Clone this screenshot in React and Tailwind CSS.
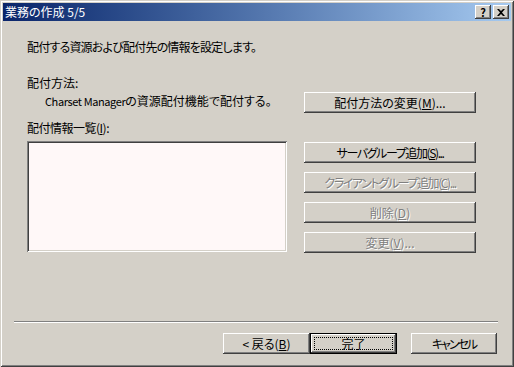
const font = {
  fontFamily: '"Noto Sans CJK JP", "Liberation Sans", sans-serif',
};

const bevel =
  "shadow-[inset_-1px_-1px_0_#404040,inset_1px_1px_0_#ffffff,inset_-2px_-2px_0_#808080,inset_2px_2px_0_#d4d0c8]";

function Button({ children, disabled, className = "" }) {
  return (
    <div
      className={`flex items-center justify-center bg-[#d4d0c8] text-[12px] leading-[12px] ${bevel} ${
        disabled ? "text-[#808080] [text-shadow:1px_1px_0_#ffffff]" : "text-black"
      } ${className}`}
    >
      {children}
    </div>
  );
}

function CaptionButton({ children }) {
  return (
    <div
      className={`w-[16px] h-[14px] flex items-center justify-center bg-[#d4d0c8] text-black text-[11px] font-bold leading-none ${bevel}`}
    >
      {children}
    </div>
  );
}

export default function App() {
  return (
    <div
      style={font}
      className="w-[514px] h-[367px] p-[3px] flex flex-col bg-[#d4d0c8] [font-feature-settings:'palt'] shadow-[inset_1px_1px_0_#d4d0c8,inset_-1px_-1px_0_#404040,inset_2px_2px_0_#ffffff,inset_-2px_-2px_0_#808080]"
    >
      {/* title bar */}
      <div className="h-[18px] flex items-center justify-between pl-[2px] pr-[2px] bg-gradient-to-r from-[#0a246a] to-[#a6caf0]">
        <span className="text-white text-[12px] leading-[12px]">業務の作成 5/5</span>
        <div className="flex gap-[2px]">
          <CaptionButton>?</CaptionButton>
          <CaptionButton>
            <svg width="8" height="7" viewBox="0 0 8 7">
              <path d="M0 0h2l2 2 2-2h2L5 3.5 8 7H6L4 5 2 7H0l3-3.5z" fill="#000" />
            </svg>
          </CaptionButton>
        </div>
      </div>

      {/* body */}
      <div className="flex flex-col pl-[24px] text-[12px] leading-[12px] text-black">
        <div className="mt-[20px] tracking-[-0.8px]">配付する資源および配付先の情報を設定します。</div>
        <div className="mt-[24px]">配付方法:</div>
        <div className="mt-[3px] flex items-start">
          <div className="w-[277px] pl-[18px] mt-[3px]">
            <span className="text-[11px] tracking-[-0.4px]">Charset Manager</span>の資源配付機能で配付する。
          </div>
          <Button className="w-[172px] h-[21px]">
            配付方法の変更(<u>M</u>)...
          </Button>
        </div>
        <div className="mt-[9px] tracking-[-0.5px]">
          配付情報一覧(<u>I</u>):
        </div>
        <div className="mt-[7px] flex items-start">
          <div className="w-[260px] h-[111px] bg-[#fff8f8] shadow-[inset_1px_1px_0_#808080,inset_-1px_-1px_0_#ffffff,inset_2px_2px_0_#404040,inset_-2px_-2px_0_#d4d0c8]" />
          <div className="ml-[17px] mt-[1px] flex flex-col gap-[9px]">
            <Button className="w-[172px] h-[21px] tracking-[-1.4px]">
              サーバグループ追加(<u>S</u>)...
            </Button>
            <Button disabled className="w-[172px] h-[21px] tracking-[-1.4px]">
              クライアントグループ追加(<u>C</u>)...
            </Button>
            <Button disabled className="w-[172px] h-[21px]">
              削除(<u>D</u>)
            </Button>
            <Button disabled className="w-[172px] h-[21px]">
              変更(<u>V</u>)...
            </Button>
          </div>
        </div>
      </div>

      {/* footer */}
      <div className="mt-auto flex flex-col pb-[10px]">
        <div className="ml-[11px] mr-[13px] h-[2px] border-t border-t-[#808080] border-b border-b-white" />
        <div className="mt-[10px] flex justify-end pr-[14px]">
          <Button className="w-[87px] h-[21px]">
            &lt; 戻る(<u>B</u>)
          </Button>
          <div className="w-[87px] h-[21px] border border-black">
            <Button className="w-full h-full relative">
              <div className="absolute inset-[3px] border border-dotted border-black" />
              完了
            </Button>
          </div>
          <Button className="ml-[14px] w-[86px] h-[21px] tracking-[-2px]">キャンセル</Button>
        </div>
      </div>
    </div>
  );
}
